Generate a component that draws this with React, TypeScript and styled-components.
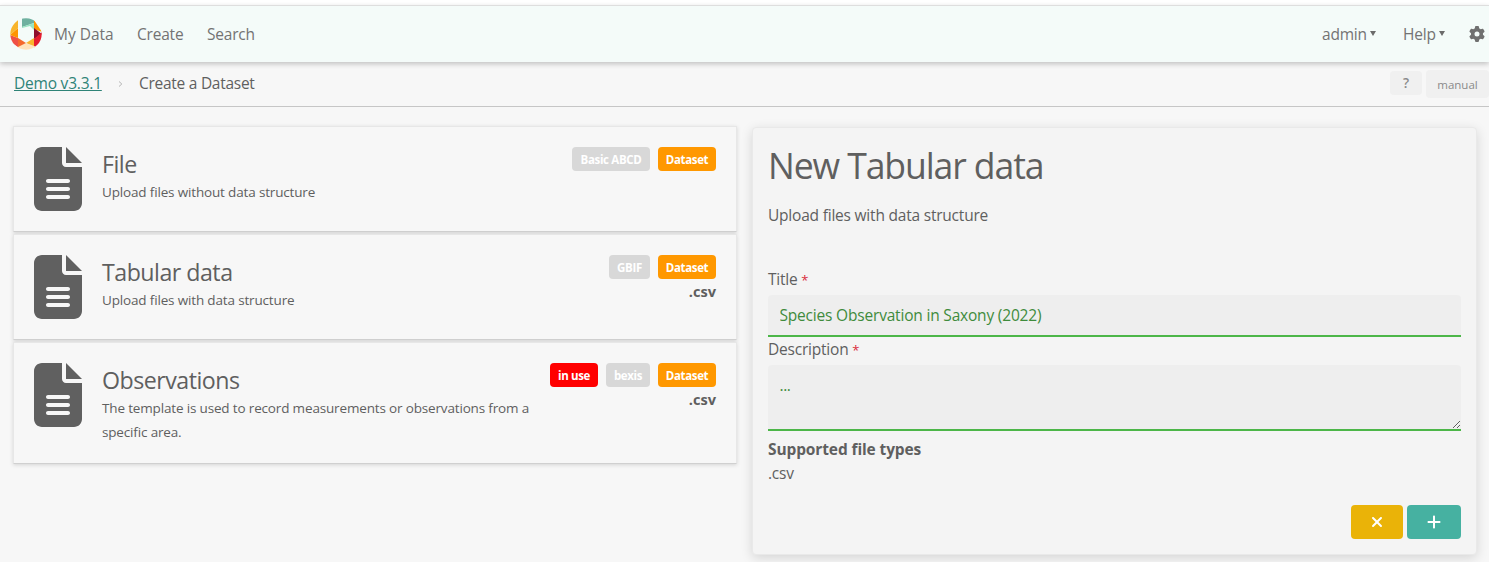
import React from "react";
import styled, { createGlobalStyle } from "styled-components";
import { FaFileLines, FaGear, FaPlus, FaXmark } from "react-icons/fa6";

const GlobalStyle = createGlobalStyle`
  *, *::before, *::after { box-sizing: border-box; }
  html, body { margin: 0; background: #f7f7f7; overflow: hidden; }
  body, input, textarea, button {
    font-family: "Segoe UI", "Open Sans", "Noto Sans", sans-serif;
    color: #5f5f5f;
  }
  h1, h2, p { margin: 0; font-weight: 400; }
`;

const Page = styled.div`
  height: 562px;
  overflow: hidden;
  font-size: 15.5px;
  line-height: 24px;
  letter-spacing: -0.21px;
`;

const Header = styled.header`
  position: relative;
  display: flex;
  align-items: center;
  height: 57px;
  margin-top: 5px;
  padding: 0 4px 0 10px;
  background: #f4fbf9;
  border-top: 1px solid #dedede;
  box-shadow: 0 2px 5px rgba(0, 0, 0, 0.22);
  color: #737373;
`;

const TopGap = styled.div`
  height: 5px;
  margin-bottom: -5px;
  background: #fff;
`;

const Nav = styled.nav<{ $gap: number }>`
  display: flex;
  align-items: center;
  gap: ${(p) => p.$gap}px;
`;

const NavItem = styled.span<{ $width: number; $spacing?: number }>`
  display: flex;
  align-items: center;
  width: ${(p) => p.$width}px;
  letter-spacing: ${(p) => p.$spacing ?? -0.21}px;
  white-space: nowrap;
`;

const Caret = styled.span`
  width: 0;
  margin: 0 0 1px 3px;
  border: 3px solid transparent;
  border-top: 5px solid #6b6b6b;
  border-bottom: 0;
`;

const Logo = styled.svg`
  width: 32px;
  height: 32px;
  margin-right: 12px;
`;

const Spacer = styled.div`
  flex: 1;
`;

const Crumbs = styled.div`
  display: flex;
  align-items: center;
  height: 45px;
  padding: 0 0 2px 14px;
  border-bottom: 1px solid #c6c6c6;
`;

const CrumbLink = styled.a`
  width: 88px;
  color: #2f8377;
  text-decoration: underline;
  white-space: nowrap;
`;

const Chevron = styled.svg`
  width: 5px;
  height: 6px;
  margin: 2px 16px 0 16px;
`;

const CurrentCrumb = styled.span`
  letter-spacing: -0.27px;
`;

const Tag = styled.button<{ $width: number; $height: number; $size: number; $top?: number; $bold?: boolean }>`
  width: ${(p) => p.$width}px;
  height: ${(p) => p.$height}px;
  margin: ${(p) => p.$top ?? 0}px 0 0 4px;
  padding: 0;
  border: 0;
  border-radius: 4px;
  background: #f0f0f0;
  color: #8a8a8a;
  font-size: ${(p) => p.$size}px;
  font-weight: ${(p) => (p.$bold ? 600 : 400)};
`;

const Main = styled.main`
  display: grid;
  grid-template-columns: 724px 725px;
  column-gap: 15px;
  align-items: start;
  padding: 19px 12px 0 13px;
`;

const List = styled.div`
  display: flex;
  flex-direction: column;
  gap: 2px;
`;

const Card = styled.article<{ $height: number }>`
  display: flex;
  height: ${(p) => p.$height}px;
  padding: 20px;
  border: 1px solid #e7e7e7;
  border-bottom-color: #d0d0d0;
  background: #f7f7f7;
  box-shadow: 0 1px 4px rgba(0, 0, 0, 0.14);
`;

const FileIcon = styled(FaFileLines)`
  flex: none;
  width: 48px;
  height: 64px;
  margin-right: 20px;
  color: #606060;
`;

const CardText = styled.div`
  flex: 1;
  padding-top: 1px;
  font-size: 13.5px;
  letter-spacing: -0.16px;
`;

const CardTitle = styled.h2`
  font-size: 23.2px;
  line-height: 32px;
  letter-spacing: -0.5px;
`;

const CardSide = styled.div`
  display: flex;
  flex-direction: column;
  align-items: flex-end;
  font-size: 14.6px;
  font-weight: 700;
  line-height: 25px;
  letter-spacing: 0;
`;

const Badges = styled.div`
  display: flex;
  gap: 8px;
`;

const Badge = styled.span<{ $bg: string; $width: number }>`
  width: ${(p) => p.$width}px;
  height: 24px;
  border-radius: 4px;
  background: ${(p) => p.$bg};
  color: #fff;
  font-size: 11.5px;
  font-weight: 700;
  letter-spacing: -0.35px;
  line-height: 26px;
  text-align: center;
  white-space: nowrap;
`;

const Panel = styled.section`
  height: 428px;
  margin-top: 1px;
  padding: 13px 15px 15px;
  border: 1px solid #e9e9e9;
  border-radius: 4px;
  background: #f4f4f4;
  box-shadow: 0 3px 12px rgba(0, 0, 0, 0.14);
`;

const PanelTitle = styled.h1`
  font-size: 35.6px;
  line-height: 48px;
  letter-spacing: -1.1px;
`;

const Intro = styled.p`
  margin: 14px 0 40px;
`;

const Label = styled.label`
  display: block;
  height: 24px;
`;

const Required = styled.span`
  color: #d92c3a;
  font-size: 13px;
  line-height: 1;
`;

const TitleInput = styled.input`
  display: block;
  width: 100%;
  height: 42px;
  margin: 4px 0 0;
  padding: 0 11.5px;
  border: 0;
  border-bottom: 2px solid #4cb648;
  border-radius: 4px 4px 0 0;
  background: #eee;
  color: #3f8b3c;
  font-size: 15.5px;
  letter-spacing: -0.19px;
  outline: 0;
`;

const Description = styled.textarea`
  display: block;
  width: 100%;
  height: 66px;
  margin: 4px 0 6px;
  padding: 8px 11.5px;
  border: 0;
  border-bottom: 2px solid #4cb648;
  border-radius: 4px 4px 0 0;
  background: #eee;
  color: #3f8b3c;
  font-size: 15.5px;
  line-height: 24px;
  letter-spacing: -0.4px;
  outline: 0;
`;

const Strong = styled.p`
  font-weight: 700;
  letter-spacing: -0.12px;
`;

const Actions = styled.div`
  display: flex;
  justify-content: flex-end;
  gap: 4px;
  margin-top: 20px;
`;

const Action = styled.button<{ $bg: string; $width: number }>`
  display: flex;
  align-items: center;
  justify-content: center;
  width: ${(p) => p.$width}px;
  height: 34px;
  padding: 0;
  border: 0;
  border-radius: 4px;
  background: ${(p) => p.$bg};
  color: #fff;
  font-size: 16px;
`;

const orange = "#ff9800";
const grey = "#d8d8d8";

type BadgeData = { text: string; bg: string; width: number };
type Template = { title: string; text: React.ReactNode; badges: BadgeData[]; types?: string; height: number };

const dataset: BadgeData = { text: "Dataset", bg: orange, width: 58 };

const templates: Template[] = [
  { title: "File", text: "Upload files without data structure", badges: [{ text: "Basic ABCD", bg: grey, width: 78 }, dataset], height: 106 },
  { title: "Tabular data", text: "Upload files with data structure", badges: [{ text: "GBIF", bg: grey, width: 41 }, dataset], types: ".csv", height: 106 },
  {
    title: "Observations",
    text: <>The template is used to record measurements or observations from a<br />specific area.</>,
    badges: [{ text: "in use", bg: "#ff0000", width: 48 }, { text: "bexis", bg: grey, width: 44 }, dataset],
    types: ".csv",
    height: 122,
  },
];

export default function App() {
  return (
    <Page>
      <GlobalStyle />
      <TopGap />
      <Header>
        <Logo viewBox="0 0 32 32">
          <defs><clipPath id="ring"><circle cx="16" cy="16" r="15.7" /></clipPath></defs>
          <g clipPath="url(#ring)">
            <path d="M12 0h12v5L12 9z" fill="#6fb1a0" />
            <path d="M12 9l12-4v7l-4-4-8 2z" fill="#97e5c2" />
            <path d="M24 2l8 12-8-3z" fill="#ff9800" />
            <path d="M24 10l8 6-8 5z" fill="#8e0e2c" />
            <path d="M24 21l8-7v12l-8 4z" fill="#e51c2e" />
            <path d="M16 25l8-5v9z" fill="#f9b52c" />
            <path d="M5 29l11-4 11 4-11 5z" fill="#ffe3bc" />
            <path d="M8 20l8 5-8 4z" fill="#f4692e" />
            <path d="M0 17l8 3v9L0 24z" fill="#ef5046" />
            <path d="M0 17l8-7v10z" fill="#ff9400" />
            <path d="M0 17V6l8-5v9z" fill="#f8b52c" />
          </g>
        </Logo>
        <Nav $gap={24}>
          <NavItem $width={59} $spacing={0}>My Data</NavItem>
          <NavItem $width={46}>Create</NavItem>
          <NavItem $width={48}>Search</NavItem>
        </Nav>
        <Spacer />
        <Nav $gap={24}>
          <NavItem $width={57}>admin<Caret /></NavItem>
          <NavItem $width={42}>Help<Caret /></NavItem>
          <FaGear size={16} color="#707070" />
        </Nav>
      </Header>
      <Crumbs>
        <CrumbLink>Demo v3.3.1</CrumbLink>
        <Chevron viewBox="0 0 5 6" fill="none" stroke="#b5b5b5"><path d="M1 .5 3.8 3 1 5.5" /></Chevron>
        <CurrentCrumb>Create a Dataset</CurrentCrumb>
        <Spacer />
        <Tag $width={32} $height={24} $size={13.5} $bold>?</Tag>
        <Tag $width={63} $height={28} $size={11.5} $top={2}>manual</Tag>
      </Crumbs>
      <Main>
        <List>
          {templates.map((t) => (
            <Card key={t.title} $height={t.height}>
              <FileIcon />
              <CardText>
                <CardTitle>{t.title}</CardTitle>
                <p>{t.text}</p>
              </CardText>
              <CardSide>
                <Badges>
                  {t.badges.map((b) => <Badge key={b.text} $bg={b.bg} $width={b.width}>{b.text}</Badge>)}
                </Badges>
                {t.types}
              </CardSide>
            </Card>
          ))}
        </List>
        <Panel>
          <PanelTitle>New Tabular data</PanelTitle>
          <Intro>Upload files with data structure</Intro>
          <Label htmlFor="title">Title <Required>*</Required></Label>
          <TitleInput id="title" defaultValue="Species Observation in Saxony (2022)" />
          <Label htmlFor="description">Description <Required>*</Required></Label>
          <Description id="description" defaultValue="..." />
          <Strong>Supported file types</Strong>
          <p>.csv</p>
          <Actions>
            <Action $bg="#eab308" $width={52}><FaXmark /></Action>
            <Action $bg="#46b1a1" $width={54}><FaPlus /></Action>
          </Actions>
        </Panel>
      </Main>
    </Page>
  );
}
